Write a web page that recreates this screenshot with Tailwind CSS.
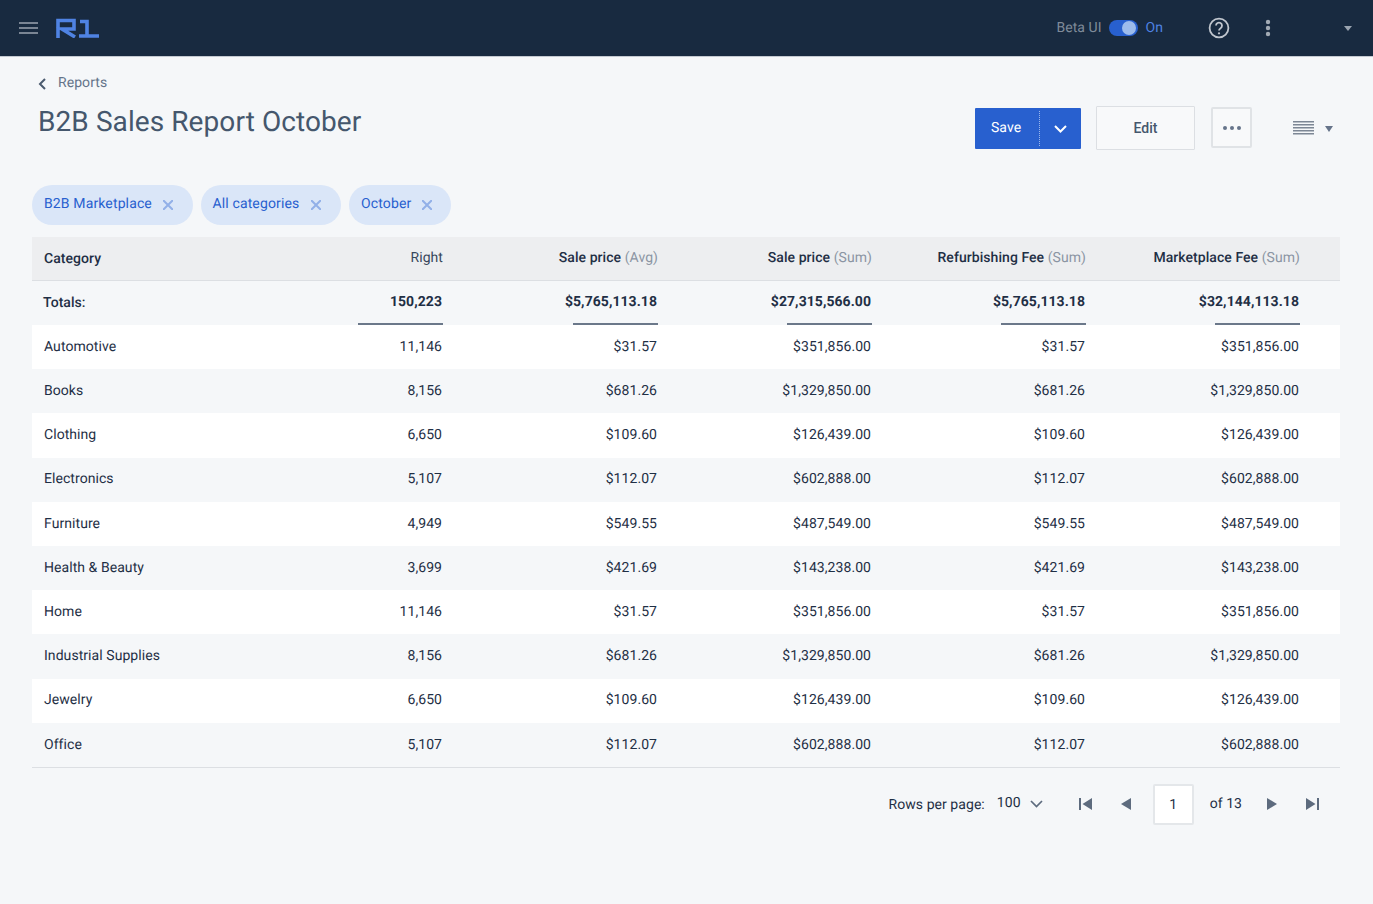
<!DOCTYPE html>
<html lang="en"><head><meta charset="utf-8"><title>B2B Sales Report October</title>
<script src="https://cdn.jsdelivr.net/npm/@tailwindcss/browser@4"></script></head>
<body class="bg-[#f5f7f9] font-['Roboto',sans-serif] [text-rendering:geometricPrecision] tracking-[0.06px] text-[14px] text-[#1f2f45] h-[904px] w-[1373px] overflow-hidden">
<header class="h-[57px] bg-[#182a40] border-b border-[#c3c9d1] flex items-center pl-[19px] pr-[21px]">
  <svg width="19" height="14" viewBox="0 0 19 14" class="-mt-[1px]"><path d="M0 2h19M0 7h19M0 12h19" stroke="#9aa4b0" stroke-width="1.6"/></svg>
  <svg width="43" height="20" viewBox="0 0 43 20" class="ml-[18px] -mt-[1px]" fill="none" stroke="#4f83e3" stroke-width="3.6"><path d="M2 20V2.500h16v8.500H6l13 8"/><path d="M24 3.500h7V18M23 18h20"/></svg>
  <div class="ml-auto flex items-center text-[14px] mb-[1px]">
    <span class="text-[#7f8b99] mt-[1px]">Beta UI</span>
    <span class="ml-[7px] w-[29px] h-[16px] rounded-full bg-[#2860cf] relative block"><span class="absolute right-[2px] top-[1px] w-[14px] h-[14px] rounded-full bg-[#9dbcec]"></span></span>
    <span class="ml-[8px] text-[#4f83e3] mt-[1px]">On</span>
    <svg width="22" height="22" viewBox="0 0 22 22" class="ml-[45px]" fill="none" stroke="#c0c6ce" stroke-width="1.8"><circle cx="11" cy="11" r="9.4"/><path d="M8 8.600a3 3 0 1 1 4.600 2.600c-1.100.7-1.600 1.200-1.600 2.400" stroke-width="1.800"/><circle cx="11" cy="16.300" r="1.100" fill="#c0c6ce" stroke="none"/></svg>
    <svg width="6" height="18" viewBox="0 0 6 18" class="ml-[35px]" fill="#a2aab4"><circle cx="3" cy="3" r="2.200"/><circle cx="3" cy="9" r="2.200"/><circle cx="3" cy="15" r="2.200"/></svg>
    <svg width="8" height="5" viewBox="0 0 8 5" class="ml-[73px] mt-[1px]" fill="#9aa4b0"><path d="M0 0h8L4 5z"/></svg>
  </div>
</header>
<main class="px-[32px]">
  <div class="flex items-center h-[53px] pl-[6px] pt-[2px] pb-[1px]">
    <svg width="8" height="12" viewBox="0 0 8 12" fill="none" stroke="#4a5a6e" stroke-width="2"><path d="M7 1 2 6l5 5"/></svg>
    <span class="ml-[12px] text-[#64748a] -mt-[1px]">Reports</span>
  </div>
  <div class="flex items-start justify-between h-[75px] pr-[8px]">
    <h1 class="pl-[6px] text-[28px] leading-[24px] text-[#45576d] tracking-[0.08px] -mt-[1px] pt-[1px]">B2B Sales Report October</h1>
    <div class="flex items-start -mt-[3px]">
      <div class="flex items-center w-[106px] h-[41px] bg-[#2860cf] rounded-[1px] text-white mt-[1px]">
        <span class="w-[64px] pl-[16px] -mt-[1px]">Save</span>
        <span class="h-[35px] border-l border-dotted border-[#9cb7ea]"></span>
        <svg width="13" height="8" viewBox="0 0 13 8" fill="none" stroke="#fff" stroke-width="2" class="ml-[14px]"><path d="m1 1 5.500 5.500L12 1"/></svg>
      </div>
      <button class="ml-[15px] w-[99px] h-[44px] bg-[#f8f9fa] border-[1.5px] border-[#dcdfe3] rounded-[1px] text-[#45576d] font-medium -mt-[1px]">Edit</button>
      <button class="ml-[16px] w-[41px] h-[41px] bg-[#f8f9fa] border-2 border-[#e0e3e6] rounded-[2px] flex items-center justify-center"><svg width="20" height="6" viewBox="0 0 20 6" fill="#66748a"><circle cx="3" cy="3" r="2"/><circle cx="10" cy="3" r="2"/><circle cx="17" cy="3" r="2"/></svg></button>
      <svg width="21" height="14" viewBox="0 0 21 14" class="ml-[41px] mt-[14px]" stroke="#7d8795" stroke-width="1.500"><path d="M0 .75h21M0 3.750h21M0 6.750h21M0 9.750h21M0 12.750h21"/></svg>
      <svg width="8" height="6" viewBox="0 0 8 6" class="ml-[11px] mt-[19px]" fill="#66748a"><path d="M0 0h8L4 6z"/></svg>
    </div>
  </div>
  <div class="flex gap-[8px] h-[40px] text-[#2860cf] tracking-[0.13px]">
    <div class="flex items-center h-[40px] w-[160.500px] rounded-[20px] bg-[#dae6f8] pl-[12px]"><span class="-mt-[1px]">B2B Marketplace</span><svg width="10" height="10" viewBox="0 0 10 10" class="ml-[11px]" stroke="#92b0e8" stroke-width="2"><path d="m0 0 10 10M10 0 0 10"/></svg></div>
    <div class="flex items-center h-[40px] w-[140.500px] rounded-[20px] bg-[#dae6f8] pl-[12px]"><span class="-mt-[1px]">All categories</span><svg width="10" height="10" viewBox="0 0 10 10" class="ml-[12px]" stroke="#92b0e8" stroke-width="2"><path d="m0 0 10 10M10 0 0 10"/></svg></div>
    <div class="flex items-center h-[40px] w-[102px] rounded-[20px] bg-[#dae6f8] pl-[12px]"><span class="-mt-[1px]">October</span><svg width="10" height="10" viewBox="0 0 10 10" class="ml-[11px]" stroke="#92b0e8" stroke-width="2"><path d="m0 0 10 10M10 0 0 10"/></svg></div>
  </div>
  <section class="mt-[12px] w-[1308px]">
    <div class="grid grid-cols-[326px_85px_215px_214px_214px_214px_40px] h-[44px] bg-[#edeef0] border-b border-[#dcdfe3] items-center text-right whitespace-nowrap">
      <div class="text-left pl-[12px] font-medium mt-[2px]">Category</div>
      <div class="text-[#37475c] -mt-[1px]">Right</div>
      <div class="font-medium -mt-[1px]">Sale price <span class="font-normal text-[#8b95a3]">(Avg)</span></div>
      <div class="font-medium -mt-[1px]">Sale price <span class="font-normal text-[#8b95a3]">(Sum)</span></div>
      <div class="font-medium -mt-[1px]">Refurbishing Fee <span class="font-normal text-[#8b95a3]">(Sum)</span></div>
      <div class="font-medium -mt-[1px]">Marketplace Fee <span class="font-normal text-[#8b95a3]">(Sum)</span></div>
    </div>
    <div class="grid grid-cols-[326px_85px_215px_214px_214px_214px_40px] h-[44px] font-bold items-center text-right">
      <div class="text-left pl-[11px] font-medium">Totals:</div>
      <div class="h-full pt-[1px] leading-[41px] pr-[1px] border-b-2 border-[#6b788a]">150,223</div>
      <div class="h-full pt-[1px] leading-[41px] pr-[1px] border-b-2 border-[#6b788a] ml-[130px] whitespace-nowrap flex justify-end">$5,765,113.18</div>
      <div class="h-full pt-[1px] leading-[41px] pr-[1px] border-b-2 border-[#6b788a] ml-[129px] whitespace-nowrap flex justify-end">$27,315,566.00</div>
      <div class="h-full pt-[1px] leading-[41px] pr-[1px] border-b-2 border-[#6b788a] ml-[129px] whitespace-nowrap flex justify-end">$5,765,113.18</div>
      <div class="h-full pt-[1px] leading-[41px] pr-[1px] border-b-2 border-[#6b788a] ml-[129px] whitespace-nowrap flex justify-end">$32,144,113.18</div>
    </div>
    <div class="border-b border-[#dcdfe3] text-right [&>div]:grid [&>div]:grid-cols-[326px_85px_215px_214px_214px_214px_40px] [&>div]:h-[44.2px] [&>div]:items-center [&>div>div]:pr-[1px] [&>div>div]:mt-[0.5px] [&>div>div:first-child]:text-left [&>div>div:first-child]:pl-[12px]">
      <div class="bg-white"><div>Automotive</div><div>11,146</div><div>$31.57</div><div>$351,856.00</div><div>$31.57</div><div>$351,856.00</div></div>
      <div><div>Books</div><div>8,156</div><div>$681.26</div><div>$1,329,850.00</div><div>$681.26</div><div>$1,329,850.00</div></div>
      <div class="bg-white"><div>Clothing</div><div>6,650</div><div>$109.60</div><div>$126,439.00</div><div>$109.60</div><div>$126,439.00</div></div>
      <div><div>Electronics</div><div>5,107</div><div>$112.07</div><div>$602,888.00</div><div>$112.07</div><div>$602,888.00</div></div>
      <div class="bg-white"><div>Furniture</div><div>4,949</div><div>$549.55</div><div>$487,549.00</div><div>$549.55</div><div>$487,549.00</div></div>
      <div><div>Health &amp; Beauty</div><div>3,699</div><div>$421.69</div><div>$143,238.00</div><div>$421.69</div><div>$143,238.00</div></div>
      <div class="bg-white"><div>Home</div><div>11,146</div><div>$31.57</div><div>$351,856.00</div><div>$31.57</div><div>$351,856.00</div></div>
      <div><div>Industrial Supplies</div><div>8,156</div><div>$681.26</div><div>$1,329,850.00</div><div>$681.26</div><div>$1,329,850.00</div></div>
      <div class="bg-white"><div>Jewelry</div><div>6,650</div><div>$109.60</div><div>$126,439.00</div><div>$109.60</div><div>$126,439.00</div></div>
      <div><div>Office</div><div>5,107</div><div>$112.07</div><div>$602,888.00</div><div>$112.07</div><div>$602,888.00</div></div>
    </div>
  </section>
  <nav class="flex items-center justify-end h-[41px] mt-[16px] w-[1287px]">
    <span class="mt-[2px]">Rows per page:</span>
    <span class="ml-[12px] -mt-[1px]">100</span>
    <svg width="13" height="8" viewBox="0 0 13 8" fill="none" stroke="#5d6b7e" stroke-width="1.700" class="ml-[9px]"><path d="m1 1 5.500 5.500L12 1"/></svg>
    <svg width="13" height="12" viewBox="0 0 13 12" fill="#5d6b7e" class="ml-[36px]"><path d="M0 0h2v12H0zM13 0v12L3.500 6z"/></svg>
    <svg width="10" height="12" viewBox="0 0 10 12" fill="#5d6b7e" class="ml-[29px]"><path d="M10 0v12L0 6z"/></svg>
    <span class="ml-[22px] w-[41px] h-[41px] bg-white border-2 border-[#e4e7ea] rounded-[2px] flex items-center justify-center pt-[2px]">1</span>
    <span class="ml-[16px] mt-[1px]">of 13</span>
    <svg width="10" height="12" viewBox="0 0 10 12" fill="#5d6b7e" class="ml-[25px]"><path d="M0 0v12l10-6z"/></svg>
    <svg width="13" height="12" viewBox="0 0 13 12" fill="#5d6b7e" class="ml-[29px]"><path d="M0 0v12l9.500-6zM11 0h2v12h-2z"/></svg>
  </nav>
</main>
</body></html>
